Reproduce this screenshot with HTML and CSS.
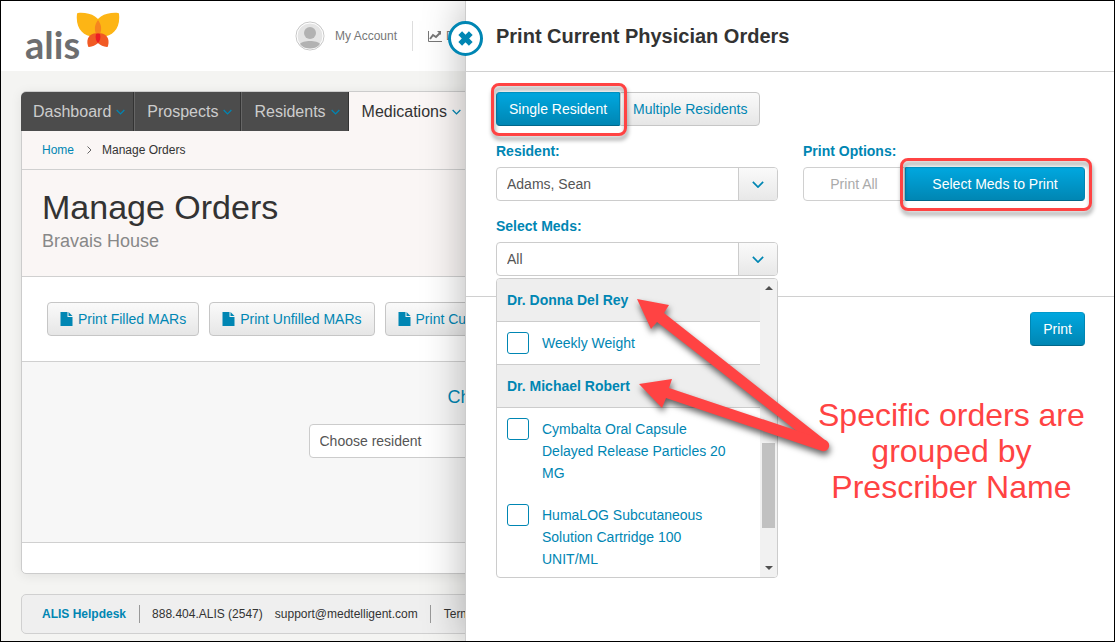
FILE: index.html
```html
<!DOCTYPE html>
<html lang="en">
  <head>
    <meta charset="utf-8" />
    <title>Manage Orders</title>
    <link rel="stylesheet" href="styles.css" />
  </head>
  <body>
    <!-- Shared icons -->
    <svg class="defs" width="0" height="0" aria-hidden="true">
      <symbol id="chevron" viewBox="0 0 14 8">
        <path d="M1 1 L7 7 L13 1" fill="none" stroke="currentColor" stroke-width="2" />
      </symbol>
      <symbol id="file" viewBox="0 0 12 14">
        <path d="M0 0 H7 V5 H12 V14 H0 Z M8 0 L12 4 H8 Z" fill="currentColor" />
      </symbol>
    </svg>

    <header class="topbar">
      <a class="logo" href="#">
        <span class="logo-text">alis</span>
        <svg class="logo-mark" viewBox="0 0 44 36" aria-hidden="true">
          <path d="M1 2 Q1 1 2 1 C14 0 25 5 25 15 C25 19 24 22 22 24 C10 27 -1 18 1 2 Z" fill="#fdb515" />
          <path d="M43 2 Q43 1 42 1 C30 0 19 5 19 15 C19 19 20 22 22 24 C34 27 45 18 43 2 Z" fill="#fdb515" />
          <path d="M22 8 C26 13 26 19 23 24 H21 C18 19 18 13 22 8 Z" fill="#f6851f" />
          <path d="M24 22 C17 19 9 24 12 34 Q12 35 13 35 C20 34 26 30 24 22 Z" fill="#f15a24" />
          <path d="M20 22 C27 19 35 24 32 34 Q32 35 31 35 C24 34 18 30 20 22 Z" fill="#f15a24" />
          <path d="M20 22 Q22 21 24 22 C25 26 24 29 22 31 C20 29 19 26 20 22 Z" fill="#ed1c24" />
        </svg>
      </a>
      <nav class="account">
        <a class="account-link" href="#">
          <svg class="avatar" viewBox="0 0 30 30" aria-hidden="true">
            <circle cx="15" cy="15" r="14" fill="#e4e4e4" stroke="#c8c8c8" />
            <circle cx="15" cy="15" r="13" fill="none" stroke="#fff" />
            <circle cx="15" cy="12" r="6" fill="#b2b2b2" />
            <path d="M5 23 C7 19 23 19 25 23 C21 29 9 29 5 23 Z" fill="#b2b2b2" />
          </svg>
          My Account
        </a>
        <a class="account-link dash-link" href="#">
          <svg class="chart" viewBox="0 0 14 11" aria-hidden="true">
            <path d="M0.5 0 V10.5 H14" fill="none" stroke="currentColor" />
            <path d="M2 8 L5 4 L8 6 L12 2" fill="none" stroke="currentColor" stroke-width="2" />
            <path d="M9 0 H13 V4 Z" fill="currentColor" />
          </svg>
          Data
        </a>
      </nav>
    </header>

    <main class="card">
      <nav class="tabs">
        <a href="#">Dashboard <svg><use href="#chevron" /></svg></a>
        <a href="#">Prospects <svg><use href="#chevron" /></svg></a>
        <a href="#">Residents <svg><use href="#chevron" /></svg></a>
        <a href="#" class="active">Medications <svg><use href="#chevron" /></svg></a>
      </nav>
      <div class="breadcrumb">
        <a href="#">Home</a>
        <svg viewBox="0 0 5 8" aria-hidden="true">
          <path d="M0.5 0.5 L4 4 L0.5 7.5" fill="none" stroke="#666" />
        </svg>
        <span>Manage Orders</span>
      </div>
      <div class="page-title">
        <h1>Manage Orders</h1>
        <p>Bravais House</p>
      </div>
      <div class="actions">
        <button class="btn" type="button"><svg><use href="#file" /></svg>Print Filled MARs</button>
        <button class="btn" type="button"><svg><use href="#file" /></svg>Print Unfilled MARs</button>
        <button class="btn" type="button"><svg><use href="#file" /></svg>Print Current Physician Orders</button>
      </div>
      <div class="chooser">
        <label for="choose">Choose a resident to begin:</label>
        <div class="select">
          <select id="choose"><option>Choose resident</option></select>
          <span class="select-arrow"><svg><use href="#chevron" /></svg></span>
        </div>
      </div>
      <div class="card-end"></div>
    </main>

    <footer class="help">
      <strong>ALIS Helpdesk</strong>
      <span class="contact"><span>888.404.ALIS (2547)</span><span>support@medtelligent.com</span></span>
      <span>Terms of Use</span>
    </footer>

    <!-- Slide-out panel -->
    <section class="panel">
      <button class="close" type="button" aria-label="Close">
        <svg viewBox="0 0 18 18" aria-hidden="true">
          <path d="M4 4 L14 14 M14 4 L4 14" stroke="currentColor" stroke-width="5" />
        </svg>
      </button>
      <h2>Print Current Physician Orders</h2>

      <div class="panel-body">
        <div class="group">
          <button class="btn primary marked" type="button">Single Resident</button>
          <button class="btn" type="button">Multiple Residents</button>
        </div>

        <div class="fields">
          <div class="field">
            <label for="resident">Resident:</label>
            <div class="select">
              <select id="resident"><option>Adams, Sean</option></select>
              <span class="select-arrow"><svg><use href="#chevron" /></svg></span>
            </div>
          </div>
          <div class="field">
            <span class="label" id="optionsLabel">Print Options:</span>
            <div class="group wide" role="group" aria-labelledby="optionsLabel">
              <button class="btn plain" type="button">Print All</button>
              <button class="btn primary marked" type="button">Select Meds to Print</button>
            </div>
          </div>
          <div class="field">
            <label for="meds">Select Meds:</label>
            <div class="select">
              <select id="meds"><option>All</option></select>
              <span class="select-arrow"><svg><use href="#chevron" /></svg></span>
              <div class="dropdown">
                <div class="options">
                  <h3>Dr. Donna Del Rey</h3>
                  <label class="option"><input type="checkbox" /><span>Weekly Weight</span></label>
                  <h3>Dr. Michael Robert</h3>
                  <label class="option"><input type="checkbox" /><span>Cymbalta Oral Capsule Delayed Release Particles 20 MG</span></label>
                  <label class="option"><input type="checkbox" /><span>HumaLOG Subcutaneous Solution Cartridge 100 UNIT/ML</span></label>
                </div>
                <div class="scrollbar">
                  <svg viewBox="0 0 8 4"><path d="M0 4 L4 0 L8 4 Z" fill="#505050" /></svg>
                  <div class="track"><div class="thumb"></div></div>
                  <svg viewBox="0 0 8 4"><path d="M0 0 L4 4 L8 0 Z" fill="#505050" /></svg>
                </div>
              </div>
            </div>
          </div>
        </div>
      </div>

      <div class="panel-footer">
        <button class="btn primary" type="button">Print</button>
      </div>

      <!-- Callout -->
      <svg class="arrows" viewBox="0 0 200 170" aria-hidden="true">
        <path d="M1 8 L33 14 L28 22 L189 149 A5 5 0 0 1 185 159 L21 31 L15 38 Z" />
        <path d="M3 93 L36 88 L33 97 L189 149 A5 5 0 0 1 186 160 L30 107 L26 117 Z" />
      </svg>
      <p class="callout">Specific orders are<br />grouped by<br />Prescriber Name</p>
    </section>
  </body>
</html>
```

FILE: styles.css
```css
* {
  box-sizing: border-box;
}
body {
  position: relative;
  margin: 0;
  min-height: 100vh;
  border: 1px solid #000;
  overflow: hidden;
  background: #f4f4f2;
  color: #333;
  font-family: "Liberation Sans", Arial, sans-serif;
  font-size: 14px;
}
h1,
h2,
h3,
p {
  margin: 0;
  font-weight: normal;
}
a {
  color: #0086b3;
  text-decoration: none;
}
svg {
  display: block;
  flex: none;
}
.defs {
  position: absolute;
}

/* Top bar */
.topbar {
  display: flex;
  align-items: center;
  height: 70px;
  padding: 0 24px;
  background: #fff;
}
.logo {
  display: flex;
  align-items: flex-start;
  width: 270px;
  padding-top: 6px;
}
.logo-text {
  padding-top: 10px;
  color: #6d6e70;
  font: bold 38px/44px Lato, sans-serif;
}
.logo-mark {
  width: 44px;
  height: 36px;
  margin-left: -4px;
}
.account {
  display: flex;
}
.account-link {
  display: flex;
  align-items: center;
  gap: 10px;
  height: 30px;
  padding-right: 15px;
  color: #777;
  font-size: 12px;
}
.dash-link {
  gap: 4px;
  padding-left: 15px;
  border-left: 1px solid #ddd;
}
.avatar {
  width: 30px;
  height: 30px;
}
.chart {
  width: 14px;
  height: 11px;
}

/* Main card */
.card {
  margin: 20px;
  border: 1px solid #ccc;
  border-radius: 5px;
  background: #fff;
  box-shadow: 0 2px 12px rgba(0, 0, 0, 0.08);
}
.tabs {
  display: flex;
  margin-left: -1px;
  border-radius: 5px 5px 0 0;
  background: #faf6f5;
  overflow: hidden;
}
.tabs a {
  display: flex;
  align-items: center;
  gap: 5px;
  height: 39px;
  padding: 0 8px 0 12px;
  border-right: 1px solid #333;
  border-left: 1px solid #666;
  background: #4c4c4c;
  color: #ccc;
  font-size: 16px;
}
.tabs a:first-child {
  border-left: 0;
}
.tabs a.active {
  border-color: transparent;
  background: #faf6f5;
  color: #333;
}
.tabs svg {
  width: 9px;
  height: 6px;
  color: #0086b3;
}
.breadcrumb {
  display: flex;
  align-items: center;
  height: 39px;
  padding: 0 20px;
  border-bottom: 1px solid #d0d0d0;
  background: #faf6f5;
  font-size: 12px;
}
.breadcrumb svg {
  width: 5px;
  height: 8px;
  margin: 0 10px 0 13px;
}
.page-title {
  padding: 17px 20px 22px;
  border-bottom: 1px solid #d0d0d0;
  background: #faf6f5;
}
.page-title h1 {
  font-size: 34px;
  line-height: 41px;
}
.page-title p {
  color: #888;
  font-size: 18px;
  line-height: 26px;
}
.actions {
  display: flex;
  gap: 10px;
  padding: 25px;
  border-bottom: 1px solid #d0d0d0;
}
.chooser {
  display: flex;
  flex-direction: column;
  align-items: center;
  padding: 25px 0 84px;
  border-bottom: 1px solid #d0d0d0;
  background: #f7f7f7;
}
.chooser label {
  margin-bottom: 17px;
  color: #0086b3;
  font-size: 18px;
  line-height: 20px;
}
.chooser .select {
  width: 498px;
}
.card-end {
  height: 30px;
}

/* Buttons */
.btn {
  position: relative;
  display: flex;
  align-items: center;
  justify-content: center;
  gap: 5px;
  height: 34px;
  padding: 0 12px;
  border: 1px solid #c6c6c6;
  border-radius: 4px;
  background: linear-gradient(#fafafa, #e6e6e6);
  color: #0086b3;
  font: inherit;
  white-space: nowrap;
}
.btn svg {
  width: 13px;
  height: 14px;
}
.btn.primary {
  border-color: #0099cb #0086b3 #00678a;
  background: linear-gradient(#00a7df, #0086b3);
  color: #fff;
}
.btn.plain {
  border-color: #d0d0d0;
  background: #fff;
  color: #aaa;
}
.group {
  display: flex;
}
.group .btn:first-child {
  border-radius: 4px 0 0 4px;
}
.group .btn:last-child {
  border-radius: 0 4px 4px 0;
}
.wide .btn {
  flex: 0 0 102px;
}
.wide .btn.primary {
  flex: 1;
}
.marked {
  z-index: 1;
}
.marked::after {
  content: "";
  position: absolute;
  inset: -10px -8px -11px -6px;
  border: 3px solid #ff4343;
  border-radius: 8px;
  filter: drop-shadow(1px 4px 2px rgba(0, 0, 0, 0.4));
}

/* Selects */
.select {
  position: relative;
}
.select select {
  display: block;
  width: 100%;
  height: 34px;
  padding: 0 50px 0 10px;
  border: 1px solid #ccc;
  border-radius: 4px;
  background: #fff;
  color: #555;
  font: inherit;
  appearance: none;
}
.select-arrow {
  position: absolute;
  top: 1px;
  right: 1px;
  display: flex;
  align-items: center;
  justify-content: center;
  width: 39px;
  height: 32px;
  border-left: 1px solid #ccc;
  border-radius: 0 3px 3px 0;
  background: linear-gradient(#fafafa, #e8e8e8);
  color: #0086b3;
  pointer-events: none;
}
.select-arrow svg {
  width: 12px;
  height: 7px;
}

/* Footer */
.help {
  display: flex;
  align-items: center;
  height: 40px;
  margin: 0 20px 7px;
  padding: 0 20px;
  border: 1px solid #d0d0d0;
  border-radius: 5px;
  background: #efefef;
  font-size: 12px;
  line-height: 18px;
}
.help strong {
  color: #0086b3;
}
.help .contact {
  display: flex;
  gap: 12px;
  margin: 0 13px;
  padding: 0 12px;
  border: 1px solid #999;
  border-width: 0 1px;
}

/* Panel */
.panel {
  position: absolute;
  top: 0;
  right: 0;
  bottom: 0;
  left: 464px;
  border-left: 1px solid #ccc;
  background: #fff;
  box-shadow: 0 0 40px rgba(0, 0, 0, 0.3);
}
.panel h2 {
  height: 71px;
  padding-left: 30px;
  border-bottom: 1px solid #d0d0d0;
  font-size: 20px;
  font-weight: bold;
  line-height: 70px;
}
.close {
  position: absolute;
  top: 20px;
  left: -18px;
  display: flex;
  align-items: center;
  justify-content: center;
  width: 35px;
  height: 35px;
  padding: 0;
  border: 3px solid #0086b3;
  border-radius: 50%;
  background: #fff;
  color: #0086b3;
}
.close svg {
  width: 19px;
  height: 19px;
}
.panel-body {
  padding: 20px 29px 20px 30px;
  border-bottom: 1px solid #d0d0d0;
}
.fields {
  display: grid;
  grid-template-columns: 1fr 1fr;
  gap: 16px 25px;
  margin-top: 16px;
}
.field > label,
.label {
  display: block;
  margin-bottom: 7px;
  color: #0086b3;
  font-weight: bold;
  line-height: 18px;
}
.panel-footer {
  display: flex;
  justify-content: flex-end;
  padding: 15px 29px;
}

/* Meds list */
.dropdown {
  position: absolute;
  top: 36px;
  left: 0;
  right: 0;
  display: flex;
  height: 300px;
  border: 1px solid #ccc;
  border-radius: 4px;
  background: #fff;
  overflow: hidden;
}
.options {
  flex: 1;
}
.options h3 {
  padding: 10px;
  border-bottom: 1px solid #ccc;
  background: #eee;
  color: #0086b3;
  font-size: 14px;
  font-weight: bold;
  line-height: 22px;
}
.option {
  display: flex;
  gap: 13px;
  padding: 10px 30px 10px 10px;
  color: #0086b3;
  line-height: 22px;
}
.option + h3 {
  border-top: 1px solid #ccc;
}
.option input {
  flex: none;
  width: 22px;
  height: 22px;
  margin: 0;
  border: 1px solid #0086b3;
  border-radius: 3px;
  background: #fff;
  appearance: none;
}
.scrollbar {
  display: flex;
  flex-direction: column;
  align-items: center;
  width: 17px;
  padding: 7px 0;
  background: #f1f1f1;
}
.scrollbar svg {
  width: 8px;
  height: 4px;
}
.track {
  display: flex;
  flex: 1;
  flex-direction: column;
  justify-content: flex-end;
  padding-bottom: 38px;
}
.thumb {
  width: 13px;
  height: 85px;
  background: #c1c1c1;
}

/* Callout */
.arrows {
  position: absolute;
  top: 290px;
  left: 170px;
  width: 200px;
  height: 170px;
  fill: #ff4343;
  filter: drop-shadow(1px 4px 3px rgba(0, 0, 0, 0.6));
}
.callout {
  position: absolute;
  top: 396px;
  left: 352px;
  color: #ff4343;
  font-size: 32px;
  line-height: 36px;
  text-align: center;
  white-space: nowrap;
}
```
